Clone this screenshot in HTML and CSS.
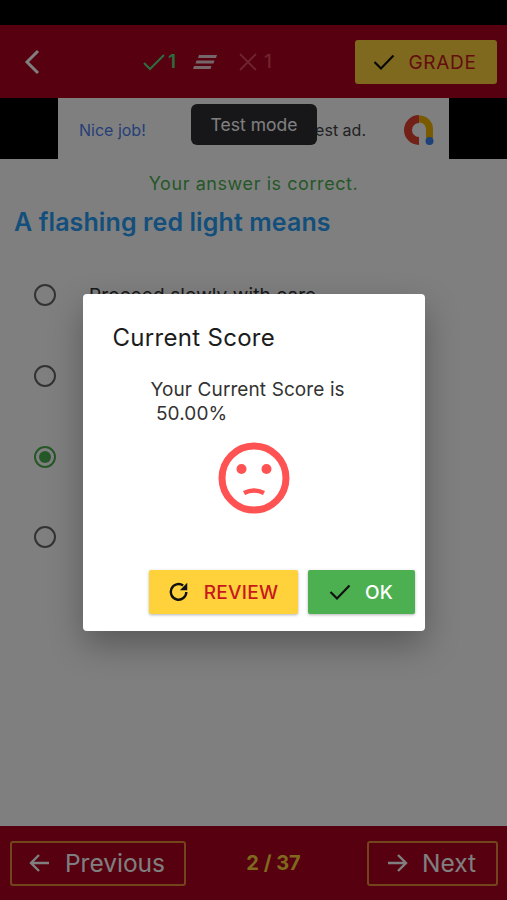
FILE: index.html
```html
<!DOCTYPE html>
<html lang="en">
<head>
	<meta charset="UTF-8">
	<meta name="viewport" content="width=device-width, initial-scale=1.0">
	<title>Quiz</title>
	<link rel="stylesheet" href="styles.css">
</head>
<body>
	<div class="screen">
		<div class="status-bar"></div>
		<header class="header">
			<svg class="back" width="20" height="28" viewBox="0 0 20 28"><path d="M15 3 L4 14 L15 25" fill="none" stroke="#fff" stroke-width="3"/></svg>
			<div class="counts">
				<svg width="22" height="18" viewBox="0 0 22 18"><path d="M1 10 L7 16 L21 2" fill="none" stroke="#5cd880" stroke-width="2.2"/></svg>
				<span class="count-good">1</span>
				<svg class="list-icon" width="24" height="16" viewBox="0 0 24 16"><path d="M6 1 H24 L23 4 H5 Z M3.500 6.500 H21.500 L20.500 9.500 H2.500 Z M1 12 H18.500 L17.500 15 H0 Z" fill="#fff" opacity=".8"/></svg>
				<svg class="cross" width="18" height="18" viewBox="0 0 18 18"><path d="M1 1 L17 17 M17 1 L1 17" fill="none" stroke="#ff6f7d" stroke-width="1.800" opacity=".65"/></svg>
				<span class="count-bad">1</span>
			</div>
			<button class="grade-btn">
				<svg width="22" height="18" viewBox="0 0 22 18"><path d="M1.500 9 L8 15.500 L20.500 2.500" fill="none" stroke="#111" stroke-width="2.200"/></svg>
				<span>GRADE</span>
			</button>
		</header>

		<div class="ad-strip">
			<div class="ad">
				<span class="ad-title">Nice job!</span>
				<span class="ad-text">This is a test ad.</span>
				<svg class="ad-logo" width="32" height="32" viewBox="0 0 32 32">
					<path d="M16 5 A11 11 0 1 0 16 27" fill="none" stroke="#e2432e" stroke-width="8"/>
					<path d="M16 5 A10 10 0 0 1 26.500 15 V24" fill="none" stroke="#f4b400" stroke-width="7"/>
					<circle cx="26.500" cy="27" r="4" fill="#3b82f0"/>
				</svg>
				<div class="test-mode">Test mode</div>
			</div>
		</div>

		<main class="main">
			<p class="result">Your answer is correct.</p>
			<h1 class="question">A flashing red light means</h1>
			<ul class="options">
				<li class="option"><span class="radio"></span><span class="option-text">Proceed slowly with care</span></li>
				<li class="option"><span class="radio"></span></li>
				<li class="option"><span class="radio radio-on"></span></li>
				<li class="option"><span class="radio"></span></li>
			</ul>
		</main>

		<footer class="footer">
			<button class="nav-btn nav-prev">
				<svg width="22" height="20" viewBox="0 0 22 20"><path d="M20 10 H2 M10 2 L2 10 L10 18" fill="none" stroke="#fff" stroke-width="2.400"/></svg>
				<span>Previous</span>
			</button>
			<span class="page-num">2 / 37</span>
			<button class="nav-btn nav-next">
				<svg width="22" height="20" viewBox="0 0 22 20"><path d="M2 10 H20 M12 2 L20 10 L12 18" fill="none" stroke="#fff" stroke-width="2.400"/></svg>
				<span>Next</span>
			</button>
		</footer>

		<div class="overlay">
			<div class="dialog">
				<h2 class="dialog-title">Current Score</h2>
				<p class="dialog-text">Your Current Score is<br>&nbsp;50.00%</p>
				<svg class="face" width="72" height="72" viewBox="0 0 72 72">
					<circle cx="36" cy="36" r="32" fill="none" stroke="#ff5252" stroke-width="7"/>
					<circle cx="23.500" cy="27" r="5" fill="#ff5252"/>
					<circle cx="48.500" cy="27" r="5" fill="#ff5252"/>
					<path d="M26 51 Q36 46 46 51" fill="none" stroke="#ff5252" stroke-width="4.500"/>
				</svg>
				<div class="dialog-btns">
					<button class="btn btn-review">
						<svg width="22" height="22" viewBox="0 0 24 24"><path d="M20 12 A8.500 8.500 0 1 1 16.500 5" fill="none" stroke="#111" stroke-width="2.600"/><path d="M21 2 V10 H13 Z" fill="#111"/></svg>
						<span>REVIEW</span>
					</button>
					<button class="btn btn-ok">
						<svg width="22" height="18" viewBox="0 0 22 18"><path d="M1.500 9 L8 15.500 L20.500 2.500" fill="none" stroke="#111" stroke-width="2.200"/></svg>
						<span>OK</span>
					</button>
				</div>
			</div>
		</div>
	</div>
</body>
</html>
```

FILE: styles.css
```css
* {
	box-sizing: border-box;
	margin: 0;
	padding: 0;
}

body {
	font-family: "Inter", "Roboto", sans-serif;
	background: #fff;
}

.screen {
	position: relative;
	width: 507px;
	height: 900px;
	display: flex;
	flex-direction: column;
	overflow: hidden;
}

.status-bar {
	height: 25px;
	background: #000;
}

.header {
	height: 73px;
	background: #ac0020;
	display: flex;
	align-items: center;
	padding: 0 10px 0 23px;
}

.back {
	margin-right: 100px;
}

.counts {
	display: flex;
	align-items: center;
	width: 212px;
	font-size: 19px;
	font-weight: 500;
}

.count-good {
	color: #5cd880;
	margin-left: 3px;
	font-weight: 600;
}

.list-icon {
	margin: 0 22px 0 17px;
}

.cross {
	margin-right: 7px;
}

.count-bad {
	color: #ff6f7d;
	opacity: .65;
}

.grade-btn {
	width: 142px;
	height: 44px;
	background: #ffd23c;
	border: none;
	border-radius: 3px;
	display: flex;
	align-items: center;
	justify-content: center;
	gap: 13px;
	font: 400 19px "Inter", sans-serif;
	color: #c8181c;
	letter-spacing: .7px;
	padding: 1px 2px 0 0;
}

.ad-strip {
	height: 61px;
	background: #000;
	display: flex;
	justify-content: center;
}

.ad {
	position: relative;
	width: 391px;
	background: #fff;
	display: flex;
	align-items: center;
	padding: 3px 14px 0 21px;
	font-size: 16px;
}

.ad-title {
	color: #4a80ee;
	font-weight: 400;
}

.ad-text {
	margin-left: auto;
	margin-right: 37px;
	color: #444;
}

.ad-logo {
	flex: none;
}

.test-mode {
	position: absolute;
	left: 133px;
	top: 6px;
	width: 126px;
	height: 41px;
	background: #2e2e34;
	border-radius: 6px;
	color: #fff;
	font-size: 17.5px;
	display: flex;
	align-items: center;
	justify-content: center;
}

.main {
	flex: 1;
	background: #fff;
}

.result {
	text-align: center;
	color: #4caf50;
	font-size: 18px;
	letter-spacing: .57px;
	margin-top: 14px;
	line-height: 22px;
}

.question {
	font-size: 25px;
	letter-spacing: .1px;
	line-height: 30px;
	font-weight: 600;
	color: #289ef8;
	margin: 12px 0 0 14px;
}

.options {
	list-style: none;
	margin-top: 18px;
}

.option {
	height: 80.7px;
	display: flex;
	align-items: center;
	padding-left: 34px;
	font-size: 19px;
	letter-spacing: .1px;
	color: #333;
}

.option-text {
	margin-top: 1px;
}

.radio {
	width: 22px;
	height: 22px;
	border: 2px solid #666;
	border-radius: 50%;
	flex: none;
	margin-right: 33px;
	display: flex;
	align-items: center;
	justify-content: center;
}

.radio-on {
	border-color: #4caf50;
}

.radio-on::after {
	content: "";
	width: 12px;
	height: 12px;
	border-radius: 50%;
	background: #4caf50;
}

.footer {
	height: 74px;
	background: #ac0020;
	display: flex;
	align-items: center;
	justify-content: space-between;
	padding: 0 9px 0 10px;
}

.nav-btn {
	height: 45px;
	background: none;
	border: 2px solid #e88a3a;
	border-radius: 3px;
	display: flex;
	align-items: center;
	justify-content: center;
	gap: 14px;
	color: #fff;
	font: 400 24.5px "Inter", sans-serif;
}

.nav-prev {
	width: 176px;
	padding-right: 2px;
}

.nav-next {
	width: 131px;
	padding-right: 3px;
}

.page-num {
	color: #ffd23c;
	font-size: 20px;
	font-weight: 700;
	margin-right: 6px;
}

.overlay {
	position: absolute;
	inset: 0;
	background: rgba(0, 0, 0, .5);
	display: flex;
	justify-content: center;
	align-items: flex-start;
	padding-top: 294px;
}

.dialog {
	width: 342px;
	height: 337px;
	background: #fff;
	border-radius: 4px;
	box-shadow: 0 14px 34px rgba(0, 0, 0, .3);
	display: flex;
	flex-direction: column;
	padding: 30px 10px 17px 30px;
}

.dialog-title {
	font-size: 24px;
	letter-spacing: .3px;
	line-height: 28px;
	font-weight: 400;
	color: #1c1c1c;
}

.dialog-text {
	font-size: 19px;
	letter-spacing: .1px;
	line-height: 24px;
	color: #333;
	margin: 26px 0 0 38px;
}

.face {
	align-self: center;
	margin: 16px 0 0 -20px;
}

.dialog-btns {
	margin-top: auto;
	display: flex;
	justify-content: flex-end;
	gap: 10px;
}

.btn {
	height: 44px;
	border: none;
	border-radius: 2px;
	box-shadow: 0 1px 3px rgba(0, 0, 0, .3);
	display: flex;
	align-items: center;
	justify-content: center;
	gap: 14px;
	font: 500 19px "Inter", sans-serif;
	letter-spacing: .3px;
}

.btn-review {
	width: 149px;
	background: #ffd23c;
	color: #c8181c;
}

.btn-ok {
	width: 107px;
	background: #4caf50;
	color: #fff;
}
```
